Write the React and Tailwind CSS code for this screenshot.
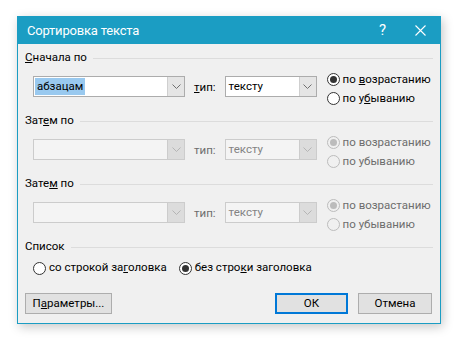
import { useState } from "react";

const font = { fontFamily: 'Roboto, "Noto Sans", sans-serif' };

function Chevron({ disabled }) {
  return (
    <svg width="9" height="5" viewBox="0 0 9 5">
      <path d="M0.5 0.5 L4.5 4.5 L8.5 0.5" fill="none" stroke={disabled ? "#b5b5b5" : "#707070"} strokeWidth="1" />
    </svg>
  );
}

function Combo({ width, value, disabled, selected }) {
  return (
    <div
      className={`flex h-[21px] border ${disabled ? "border-[#cccccc] bg-[#f4f4f4]" : "border-[#acacac] bg-white"}`}
      style={{ width }}
    >
      <div className={`flex-1 flex items-center pl-[1px] text-[11.5px] whitespace-nowrap ${disabled ? "text-[#838383]" : "text-black"}`}>
        {value && (
          <span className={`px-[2px] leading-[17px] ${selected ? "bg-[#99c9ef]" : ""}`}>{value}</span>
        )}
      </div>
      <div
        className={`w-[17px] flex items-center justify-center border-l ${disabled ? "bg-[#dcdcdc] border-[#cccccc]" : "bg-[#e5e5e5] border-[#cfcfcf]"}`}
      >
        <Chevron disabled={disabled} />
      </div>
    </div>
  );
}

function Radio({ checked, disabled, children, onClick }) {
  return (
    <div className="flex items-center h-[19px] cursor-default whitespace-nowrap" onClick={onClick}>
      <div
        className={`w-[13px] h-[13px] rounded-full border flex items-center justify-center ${disabled ? "border-[#bcbcbc] bg-[#f0f0f0]" : "border-[#333333] bg-white"}`}
      >
        {checked && <div className={`w-[7px] h-[7px] rounded-full ${disabled ? "bg-[#bcbcbc]" : "bg-[#333333]"}`} />}
      </div>
      <span className={`ml-[3px] text-[11.5px] ${disabled ? "text-[#6d6d6d]" : "text-black"}`}>{children}</span>
    </div>
  );
}

function Label({ children }) {
  return (
    <div className="flex items-center h-[16px] text-[11.5px] text-black whitespace-nowrap">
      <span className="shrink-0">{children}</span>
      <div className="flex-1 ml-[6px] h-px bg-[#dcdcdc]" />
    </div>
  );
}

function SortSection({ label, value, type, disabled, selected, u1, u2 }) {
  return (
    <div>
      <Label>{label}</Label>
      <div className="flex items-start mt-[4px] h-[38px] pl-[8px]">
        <div className="mt-[6px]">
          <Combo width={152} value={value} disabled={disabled} selected={selected} />
        </div>
        <span className={`mt-[9px] ml-[9px] text-[11.5px] ${disabled ? "text-[#6d6d6d]" : "text-black"}`}>
          {disabled ? "тип:" : <><u>т</u>ип:</>}
        </span>
        <div className="mt-[6px] ml-[9px]">
          <Combo width={92} value={type} disabled={disabled} />
        </div>
        <div className="ml-[10px]">
          <Radio checked disabled={disabled}>{u1}</Radio>
          <Radio disabled={disabled}>{u2}</Radio>
        </div>
      </div>
    </div>
  );
}

export default function App() {
  const [header, setHeader] = useState(false);

  return (
    <div className="w-[461px] h-[345px] bg-white pt-[16px] pl-[17px]" style={font}>
      <div className="w-[424px] border border-[#1b9dc3] bg-[#f0f0f0] shadow-[2px_3px_10px_rgba(0,0,0,0.22)]">
        {/* Title bar */}
        <div className="flex items-center h-[27px] bg-[#1b9dc3] text-white">
          <span className="ml-[9px] text-[13px] tracking-[-0.2px] leading-none">Сортировка текста</span>
          <span className="ml-auto text-[15px] leading-none mr-[29px]">?</span>
          <svg width="11" height="11" viewBox="0 0 11 11" className="mr-[14px]">
            <path d="M0.5 0.5 L10.5 10.5 M10.5 0.5 L0.5 10.5" stroke="white" strokeWidth="1.1" />
          </svg>
        </div>

        {/* Body */}
        <div className="px-[7px] pt-[6px] pb-[9px]">
          <SortSection
            label={<><u>С</u>начала по</>}
            value="абзацам"
            type="тексту"
            selected
            u1={<>по <u>в</u>озрастанию</>}
            u2={<>по у<u>б</u>ыванию</>}
          />
          <div className="mt-[5px]">
            <SortSection
              label={<>Зат<u>е</u>м по</>}
              type="тексту"
              disabled
              u1="по возрастанию"
              u2="по убыванию"
            />
          </div>
          <div className="mt-[5px]">
            <SortSection
              label={<>Зате<u>м</u> по</>}
              type="тексту"
              disabled
              u1="по возрастанию"
              u2="по убыванию"
            />
          </div>

          <div className="mt-[5px]">
            <Label>Список</Label>
            <div className="flex items-center mt-[4px] h-[18px] pl-[8px] gap-[12px]">
              <Radio checked={header} onClick={() => setHeader(true)}>
                со строкой за<u>г</u>оловка
              </Radio>
              <Radio checked={!header} onClick={() => setHeader(false)}>
                без стро<u>к</u>и заголовка
              </Radio>
            </div>
          </div>

          <div className="flex items-center mt-[16px] h-[21px]">
            <button className="w-[87px] h-[21px] bg-[#e1e1e1] border border-[#adadad] text-[11.5px] text-black">
              П<u>а</u>раметры...
            </button>
            <button className="ml-auto w-[73px] h-[21px] bg-[#e1e1e1] border-2 border-[#0078d7] text-[11.5px] text-black">
              ОК
            </button>
            <button className="ml-[10px] w-[74px] h-[21px] bg-[#e1e1e1] border border-[#adadad] text-[11.5px] text-black mr-[1px]">
              Отмена
            </button>
          </div>
        </div>
      </div>
    </div>
  );
}
